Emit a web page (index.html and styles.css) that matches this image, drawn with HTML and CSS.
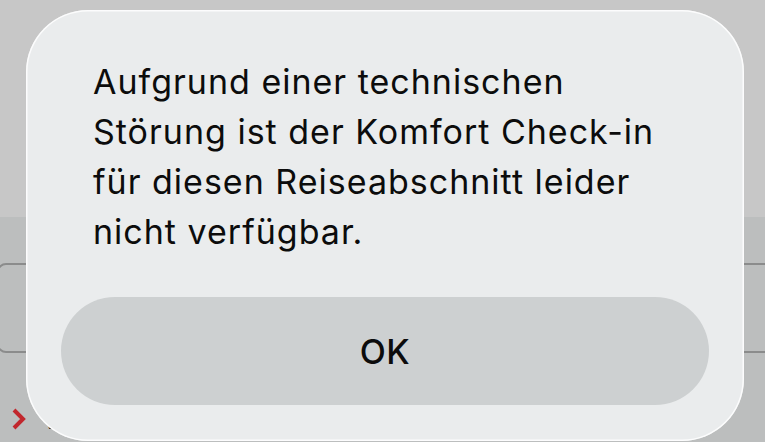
FILE: index.html
```html
<!DOCTYPE html>
<html lang="de">
<head>
  <meta charset="UTF-8">
  <meta name="viewport" content="width=device-width, initial-scale=1.0">
  <title>Komfort Check-in</title>
  <link rel="stylesheet" href="styles.css">
</head>
<body>
  <div class="screen">
    <div class="top-area"></div>
    <div class="content">
      <div class="card"></div>
      <div class="link-row">
        <svg class="chevron" width="14" height="22" viewBox="0 0 14 22">
          <path d="M2 2 L11 11 L2 20" fill="none" stroke="#c1272d" stroke-width="4"/>
        </svg>
        <span class="link-text">Weitere Informationen</span>
      </div>
    </div>

    <div class="alert">
      <p class="alert-msg">Aufgrund einer technischen Störung ist der Komfort Check-in für diesen Reiseabschnitt leider nicht verfügbar.</p>
      <button class="alert-btn">OK</button>
    </div>
  </div>
</body>
</html>
```

FILE: styles.css
```css
body { margin: 0; font-family: Inter, "Noto Sans", sans-serif; background: #bcbebe; }
.screen { position: relative; width: 765px; height: 442px; overflow: hidden; }

/* dimmed page behind the alert */
.top-area { height: 217px; background: #c7c7c7; }
.content { background: #bcbebe; padding-top: 46px; }
.card { height: 86px; margin: 0 -12px 0 -3px; border: 2px solid #8b8c8c; border-radius: 9px; }
.link-row { display: flex; align-items: flex-start; gap: 17px; padding: 55px 0 0 12px; }
.chevron { flex: none; }
.link-text { color: #222; font-size: 28px; font-weight: 600; line-height: 28px; white-space: nowrap; margin-top: -3px; }

/* alert */
.alert {
  position: absolute; left: 26px; top: 10px; width: 718px; height: 431px;
  box-sizing: border-box; padding: 47px 35px 36px;
  background: #eaeced; border-radius: 62px;
  box-shadow: inset 0 0 0 1.5px rgba(255,255,255,0.85);
  display: flex; flex-direction: column;
}
.alert-msg {
  margin: 0 0 0 32px; width: 585px; flex: 1;
  font-size: 34px; line-height: 50px; color: #0c0c0c; letter-spacing: 1px;
}
.alert-btn {
  height: 108px; border: none; border-radius: 54px;
  background: #cdd0d1; color: #0c0c0c;
  font-family: inherit; font-size: 34px; font-weight: 500; letter-spacing: 0.5px;
}
```
